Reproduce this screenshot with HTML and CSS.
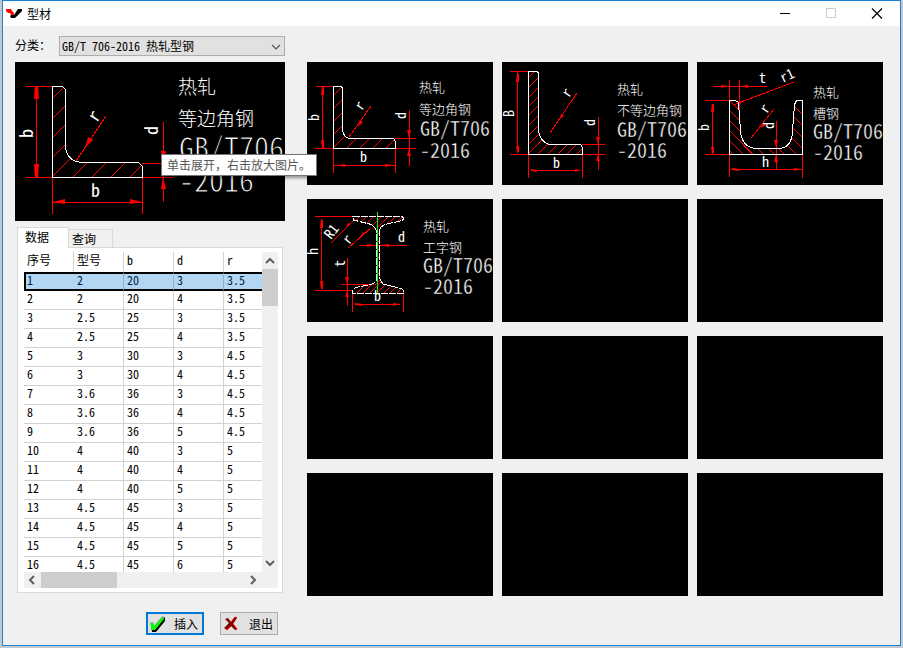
FILE: index.html
```html
<!DOCTYPE html>
<html lang="zh-CN">
<head>
<meta charset="utf-8">
<title>型材</title>
<link rel="stylesheet" href="styles.css">
</head>
<body>
<main class="window">
  <header class="titlebar">
    <svg class="app-icon" width="16" height="16" viewBox="0 0 16 16" aria-hidden="true"><path d="M0 3h5l1 2 2 2v2H5L4 7H2L0 5z" fill="#f00"/><path d="M12 3h4v2l-7 7H5l-1-2 1-1h3z" fill="#000"/></svg>
    <h1 class="title">型材</h1>
    <div class="window-controls">
      <button class="win-btn" aria-label="最小化"><svg width="12" height="12"><path d="M1 5.500h10" stroke="#000"/></svg></button>
      <button class="win-btn" aria-label="最大化" disabled><svg width="12" height="12"><path d="M1.500 .5h9v9h-9z" fill="none" stroke="#ccc"/></svg></button>
      <button class="win-btn" aria-label="关闭"><svg width="12" height="12"><path d="M1 .5l10 10M11 .5L1 10.500" stroke="#000" stroke-width="1.200"/></svg></button>
    </div>
  </header>
  <div class="content">
    <section class="side">
      <div class="category">
        <label for="category">分类：</label>
        <div class="select-wrap">
          <select id="category"><option>GB/T 706-2016 热轧型钢</option></select>
          <svg class="chevron" width="10" height="6" viewBox="0 0 10 6" aria-hidden="true"><path d="M1 1l4 4 4-4" fill="none" stroke="#555" stroke-width="1.200"/></svg>
        </div>
      </div>
      <div class="preview">
        <svg class="drawing" viewBox="0 0 270 159">
          <defs><clipPath id="p0"><path d="M37 24h10l3 3v58q0 15 16 16h57l4 4v13H37z"/></clipPath></defs>
          <path class="hatch" clip-path="url(#p0)" d="M37 37l15-15M37 57l15-15M37 76l15-15M37 96l15-15M37 115l18-18M57 116l18-18M76 116l18-18M95 116l18-18M114 116l18-18"/>
          <path class="dim" d="M11 24.500h27M11 115.500h27M21.500 24v91M37.500 116v36M127.500 115v37M38 140.500h89M127 101.500h22M127 115.500h31M148.500 60v80M91 54L61 99"/>
          <path class="arrow" d="M20 24h3l1 13h-5zM20 115h3l1-13h-5zM38 140l12-3v5zM127 140l-12-3v5zM148 101l-2-12h5zM148 115l-2 12h5zM70 86l3-11 5 3z"/>
          <path class="outline" d="M37.500 24.500h10l3 3v55q0 17 17 18h56l4 4v11h-90z"/>
          <text class="dim-lg" transform="translate(18 76) rotate(-90)">b</text>
          <text class="dim-lg" x="76" y="135">b</text>
          <text class="dim-lg" transform="translate(143 73) rotate(-90)">d</text>
          <text class="dim-lg" transform="translate(82 61) rotate(-57)">r</text>
          <g class="name-lg"><text x="163" y="32">热轧</text><text x="163" y="64">等边角钢</text></g>
          <g class="code-lg"><text x="164" y="97">GB/T706</text><text x="164" y="130">-2016</text></g>
        </svg>
        <div class="tooltip" role="tooltip">单击展开，右击放大图片。</div>
      </div>
      <div class="tabs">
        <div class="tab-list" role="tablist">
          <button class="tab active" role="tab" aria-selected="true">数据</button>
          <button class="tab" role="tab" aria-selected="false">查询</button>
        </div>
        <div class="tab-panel" role="tabpanel">
          <div class="table-area">
            <table class="data">
              <thead><tr><th>序号</th><th>型号</th><th>b</th><th>d</th><th>r</th></tr></thead>
              <tbody>
                <tr class="selected"><td>1</td><td>2</td><td>20</td><td>3</td><td>3.5</td></tr>
                <tr><td>2</td><td>2</td><td>20</td><td>4</td><td>3.5</td></tr>
                <tr><td>3</td><td>2.5</td><td>25</td><td>3</td><td>3.5</td></tr>
                <tr><td>4</td><td>2.5</td><td>25</td><td>4</td><td>3.5</td></tr>
                <tr><td>5</td><td>3</td><td>30</td><td>3</td><td>4.5</td></tr>
                <tr><td>6</td><td>3</td><td>30</td><td>4</td><td>4.5</td></tr>
                <tr><td>7</td><td>3.6</td><td>36</td><td>3</td><td>4.5</td></tr>
                <tr><td>8</td><td>3.6</td><td>36</td><td>4</td><td>4.5</td></tr>
                <tr><td>9</td><td>3.6</td><td>36</td><td>5</td><td>4.5</td></tr>
                <tr><td>10</td><td>4</td><td>40</td><td>3</td><td>5</td></tr>
                <tr><td>11</td><td>4</td><td>40</td><td>4</td><td>5</td></tr>
                <tr><td>12</td><td>4</td><td>40</td><td>5</td><td>5</td></tr>
                <tr><td>13</td><td>4.5</td><td>45</td><td>3</td><td>5</td></tr>
                <tr><td>14</td><td>4.5</td><td>45</td><td>4</td><td>5</td></tr>
                <tr><td>15</td><td>4.5</td><td>45</td><td>5</td><td>5</td></tr>
                <tr><td>16</td><td>4.5</td><td>45</td><td>6</td><td>5</td></tr>
              </tbody>
            </table>
            <div class="vscroll" aria-hidden="true">
              <svg width="16" height="17"><path d="M4 11l4-4 4 4" class="scroll-arrow"/></svg>
              <div class="vthumb"></div>
              <svg width="16" height="17"><path d="M4 6l4 4 4-4" class="scroll-arrow"/></svg>
            </div>
          </div>
          <div class="hscroll" aria-hidden="true">
            <svg width="17" height="16"><path d="M10 4L6 8l4 4" class="scroll-arrow"/></svg>
            <div class="hthumb"></div>
            <svg width="17" height="16"><path d="M6 4l4 4-4 4" class="scroll-arrow"/></svg>
          </div>
        </div>
      </div>
      <div class="actions">
        <button class="btn primary"><svg width="18" height="18" viewBox="0 0 18 18" aria-hidden="true"><path d="M2 9l4 3 9-10 1 1v3L7 17H3z" fill="#000"/><path d="M1 8h4v3L14 1l1 3-9 11H3z" fill="#0f0"/><path d="M1 8h4M6 10l8-9" stroke="#999" fill="none"/></svg>插入</button>
        <button class="btn"><svg width="18" height="18" viewBox="0 0 18 18" aria-hidden="true"><path d="M3 4l3-1 3 4 4-5 2 1-4 6 4 5-2 1-4-4-4 4-3-2 5-5z" fill="#800000"/><path d="M11 9l4 5-1 1M3 13l2 2 4-4M9 7l4-5 2 1" fill="none" stroke="#f00"/></svg>退出</button>
      </div>
    </section>
    <section class="gallery">
      <div class="tile">
        <svg class="drawing" viewBox="0 0 186 123">
          <defs><clipPath id="p1"><path d="M26 24h9v44q2 8 9 8h43l2 3v7H26z"/></clipPath></defs>
          <path class="hatch" clip-path="url(#p1)" d="M26 34l12-12M26 47l12-12M26 60l12-12M26 73l12-12M26 86l14-14M39 87l12-12M52 87l12-12M65 87l12-12M78 87l12-12"/>
          <path class="dim" d="M9 24.500h17M8 86.500h19M15.500 24v62M26.500 86v25M88.500 86v25M27 103.500h61M88 76.500h21M88 86.500h21M102.500 48v56M64 44L42 75"/>
          <path class="arrow" d="M14 33l1-8h2v8zM14 78l1 8h2v-8zM38 102l-8 1 8 2zM78 102l8 1-8 2zM102 76l-2-8h4zM102 86l-2 8h4zM51 65l2-7 3 2z"/>
          <path class="outline" d="M26.500 24.500h8l1 2v42q2 8 8 8h43l2 3v7h-62z"/>
          <text class="dim-sm" transform="translate(12 59) rotate(-90)">b</text><text class="dim-sm" x="53" y="100">b</text>
          <text class="dim-sm" transform="translate(99 57) rotate(-90)">d</text><text class="dim-sm" transform="translate(55 49) rotate(-57)">r</text>
          <g class="name-sm"><text x="112" y="30">热轧</text><text x="112" y="52">等边角钢</text></g>
          <g class="code-sm"><text x="113" y="74">GB/T706</text><text x="113" y="96">-2016</text></g>
        </svg>
      </div>
      <div class="tile">
        <svg class="drawing" viewBox="0 0 186 123">
          <defs><clipPath id="p2"><path d="M26 9h10v60q2 10 12 13h30l2 2v8H26z"/></clipPath></defs>
          <path class="hatch" clip-path="url(#p2)" d="M26 16l12-12M26 26l12-12M26 36l12-12M26 45l12-12M26 54l12-12M26 64l12-12M26 74l12-12M26 83l12-12M26 92l14-14M36 92l14-14M46 92l12-12M56 92l12-12M65 92l12-12M75 92l12-12"/>
          <path class="dim" d="M8 9.500h19M8 92.500h18M15.500 10v81M26.500 92v24M80.500 92v24M29 108.500h49M80 82.500h23M80 92.500h23M96.500 55v53M75 31L48 71"/>
          <path class="arrow" d="M14 20l1-8h2v8zM14 84l1 6h2v-6zM35 108l-6-1v2l6 1zM73 107l5 1-5 2zM96 82l-2-7h4zM96 92l-2 7h4zM58 57l1-5 3 2z"/>
          <path class="outline" d="M26.500 9.500h9l1 2v56q0 10 10 15h32l2 3v7h-54z"/>
          <text class="dim-sm" transform="translate(12 55) rotate(-90)">B</text><text class="dim-sm" x="51" y="106">b</text>
          <text class="dim-sm" transform="translate(93 64) rotate(-90)">d</text><text class="dim-sm" transform="translate(67 36) rotate(-57)">r</text>
          <g class="name-sm"><text x="115" y="32">热轧</text><text x="115" y="53">不等边角钢</text></g>
          <g class="code-sm"><text x="115" y="75">GB/T706</text><text x="115" y="96">-2016</text></g>
        </svg>
      </div>
      <div class="tile">
        <svg class="drawing" viewBox="0 0 186 123">
          <defs><clipPath id="p3"><path d="M32 38h7l3 3 3 34q2 11 14 11h22q12 0 14-11l3-34 3-3h5v54H32z"/></clipPath></defs>
          <path class="hatch" clip-path="url(#p3)" d="M32 38l16 16M32 48l16 16M32 58l16 16M32 68l26 26M32 78l16 16M32 88l8 8M46 83l12 12M59 85l10 10M70 85l10 10M79 84l12 12M88 81l14 14M93 74l14 14M95 65l14 14M96 54l14 14M97 44l12 12"/>
          <path class="dim" d="M8 38.500h24M8 92.500h24M15.500 42v50M16 24.500h54M32.500 18v97M42.500 18v44M105.500 92v24M34 107.500h72M79.500 59v49M97 20L36 43M77 47L54 76"/>
          <path class="arrow" d="M14 50l1-8h2v8zM14 85l1 6h2v-6zM24 23l8 1-8 2zM51 23l-8 1 8 2zM42 107l-7-1v2l7 1zM97 106l7 1-7 2zM79 86l-2-8h4zM79 92l-2 8h4zM64 66l2-5 3 2zM40 40l8-2-5 4z"/>
          <path class="outline" d="M32.500 38.500h6l3 2 1 14 1 14q1 17 16 18h22q13 0 14-17l1-14 1-13 2-4h6v54h-73z"/>
          <text class="dim-sm" transform="translate(12 69) rotate(-90)">b</text><text class="dim-sm" x="62" y="21">t</text>
          <text class="dim-sm" transform="translate(86 21) rotate(-26)">r1</text><text class="dim-sm" transform="translate(70 52) rotate(-57)">r</text>
          <text class="dim-sm" transform="translate(77 67) rotate(-90)">d</text><text class="dim-sm" x="65" y="105">h</text>
          <g class="name-sm"><text x="116" y="35">热轧</text><text x="116" y="56">槽钢</text></g>
          <g class="code-sm"><text x="116" y="77">GB/T706</text><text x="116" y="98">-2016</text></g>
        </svg>
      </div>
      <div class="tile">
        <svg class="drawing" viewBox="0 0 186 123">
          <defs><clipPath id="p4"><path d="M45 17h52v4l-20 4-4 5v50q0 6 12 7l11 3v4H46v-4q0-3 18-5 5-1 6-5V30q-1-4-8-5l-17-4z"/></clipPath></defs>
          <path class="hatch" clip-path="url(#p4)" d="M46 24l8-8M52 25l9-9M59 25l9-9M66 26l10-10M71 28l12-12M78 28l12-12M85 28l12-12M68 38l8-8M68 46l8-8M68 54l8-8M68 62l8-8M68 70l8-8M68 78l8-8M68 86l8-8M48 96l10-10M54 96l11-11M61 96l14-14M68 96l10-10M75 96l10-10M81 96l10-10M88 96l10-10"/>
          <path class="dim" d="M8 17.500h38M8 91.500h38M14.500 20v70M24 44l24-24M41 49l23-20M52 46.500h48M34 85.500h33M40.500 59v48M45.500 92v21M96.500 92v21M48 105.500h45"/>
          <path class="arrow" d="M13 29l1-8h2v8zM13 82l1 8h2v-8zM40 85l-2-7h4zM40 91l-2 7h4zM55 105l-7-1v2l7 1zM86 104l7 1-7 2zM60 45l8 1-8 2zM82 45l-8 1 8 2zM53 38l3-5 3 1zM39 29l2-5 3 1z"/>
          <path d="M70.500 13v82" stroke="#0f0"/>
          <path class="outline dashed" d="M45.500 17.500h50l1 2-1 2-18 4-4 3-1 4v46q1 5 5 7l17 4 2 2v3H45.500v-3l3-3 15-3q5-1 6-5V32q-1-5-7-7l-16-4z"/>
          <text class="dim-sm" transform="translate(11 56) rotate(-90)">h</text><text class="dim-sm" transform="translate(24 41) rotate(-52)">R1</text>
          <text class="dim-sm" transform="translate(42 46) rotate(-50)">r</text><text class="dim-sm" x="91" y="43">d</text>
          <text class="dim-sm" transform="translate(38 68) rotate(-90)">t</text><text class="dim-sm" x="67" y="102">b</text>
          <g class="name-sm"><text x="116" y="32">热轧</text><text x="116" y="53">工字钢</text></g>
          <g class="code-sm"><text x="116" y="74">GB/T706</text><text x="116" y="95">-2016</text></g>
        </svg>
      </div>
      <div class="tile"></div><div class="tile"></div>
      <div class="tile"></div><div class="tile"></div><div class="tile"></div>
      <div class="tile"></div><div class="tile"></div><div class="tile"></div>
    </section>
  </div>
</main>
</body>
</html>
```
FILE: styles.css
```css
* { box-sizing: border-box; }
body {
  margin: 0;
  padding: 0 2px 2px;
  min-height: 100vh;
  display: flex;
  background: #c4c8cc;
  color: #000;
  font: 12px/16px "Noto Sans Mono CJK SC", "Noto Sans CJK SC", monospace;
}
button, select { font: inherit; color: inherit; border-radius: 0; margin: 0; }
.window {
  flex: 1;
  display: flex;
  flex-direction: column;
  border: 1px solid #1883d7;
  background: #f0f0f0;
}
.titlebar {
  display: flex;
  align-items: center;
  height: 25px;
  padding-left: 3px;
  background: #fff;
}
.title { margin: 0 auto 0 5px; font: 12px/16px "Noto Sans CJK SC", sans-serif; }
.window-controls { display: flex; }
.win-btn {
  display: flex;
  align-items: center;
  justify-content: center;
  width: 46px;
  height: 25px;
  padding: 0;
  border: 0;
  background: none;
}
.content { flex: 1; display: flex; gap: 22px; padding: 10px 17px 10px 12px; }
.side { flex: 0 0 270px; display: flex; flex-direction: column; }
.category { display: flex; align-items: center; margin-bottom: 6px; }
.category label { width: 44px; padding-bottom: 2px; }
.select-wrap { position: relative; flex: 1; display: flex; }
.select-wrap select {
  flex: 1;
  height: 20px;
  padding: 0 2px;
  appearance: none;
  border: 1px solid #adadad;
  background: #e1e1e1;
}
.chevron { position: absolute; right: 4px; top: 8px; }
.preview { position: relative; background: #000; }
.drawing { display: block; width: 100%; }
.tooltip {
  position: absolute;
  left: 146px;
  top: 92px;
  z-index: 1;
  padding: 1px 5px;
  border: 1px solid #767676;
  background: #fff;
  box-shadow: 2px 2px 3px rgba(0, 0, 0, .4);
  color: #575757;
  font: 12px/18px "Noto Sans CJK SC", sans-serif;
  white-space: nowrap;
}
.dim, .hatch { fill: none; stroke: #f00; stroke-width: 1; shape-rendering: crispEdges; }
.arrow { fill: #f00; }
.outline { fill: none; stroke: #fff; stroke-width: 1; shape-rendering: crispEdges; }
.dashed { stroke-dasharray: 7 1; }
.drawing text { fill: #fff; }
.dim-lg, .dim-sm { font-family: "Noto Sans Mono CJK SC", monospace; }
.dim-lg { font-size: 18px; }
.dim-sm { font-size: 14px; }
.name-lg, .name-sm { font-family: "Noto Sans CJK SC", sans-serif; font-weight: 300; }
.name-lg { font-size: 19px; }
.name-sm { font-size: 13px; }
.code-lg, .code-sm { font-family: "Noto Sans Mono CJK SC", monospace; stroke: #000; }
.code-lg { font-size: 30px; stroke-width: 1; }
.code-sm { font-size: 20px; stroke-width: .4; }
.tabs { margin: 6px 2px 0; }
.tab-list { display: flex; align-items: flex-end; height: 20px; }
.tab {
  width: 44px;
  height: 18px;
  padding: 0 3px;
  border: 1px solid #d9d9d9;
  border-width: 1px 1px 0 0;
  background: #f0f0f0;
  text-align: left;
}
.tab.active {
  position: relative;
  width: 52px;
  height: 21px;
  margin-bottom: -1px;
  padding: 0 7px 2px;
  border-width: 1px 1px 0;
  background: #fff;
}
.tab-panel { padding: 4px 4px 4px 6px; border: 1px solid #d9d9d9; background: #fff; }
.table-area { display: flex; height: 320px; overflow: hidden; }
.data { flex: 1; width: 238px; table-layout: fixed; border-collapse: separate; border-spacing: 0; align-self: flex-start; }
.data th, .data td {
  height: 19px;
  padding: 0 0 0 3px;
  border-right: 1px solid #d2d2d2;
  border-bottom: 1px solid #d2d2d2;
  text-align: left;
  vertical-align: top;
  font-weight: 400;
  line-height: 14px;
}
.data th { width: 50px; height: 20px; border-bottom: 0; line-height: 16px; }
.data td:first-child { border-right: 0; }
.data th:last-child { width: 38px; }
.data th:last-child, .data td:last-child { border-right: 0; }
.data .selected td {
  border-top: 2px solid #000;
  border-bottom: 2px solid #000;
  background: #b3d7f3;
  border-right-color: #8eb3d0;
  color: #002244;
  line-height: 12px;
}
.data .selected td:first-child { border-left: 2px solid #000; padding-left: 1px; }
.vscroll, .hscroll { display: flex; background: #f0f0f0; }
.vscroll { flex: 0 0 16px; flex-direction: column; }
.vthumb { height: 37px; margin-bottom: auto; background: #cdcdcd; }
.hscroll { height: 16px; }
.hthumb { width: 76px; margin-right: auto; background: #cdcdcd; }
.scroll-arrow { fill: none; stroke: #606060; stroke-width: 2; }
.hscroll svg:last-child { margin-right: 16px; }
.actions { display: flex; justify-content: flex-end; gap: 16px; margin: 19px 7px 0 0; }
.btn {
  display: flex;
  align-items: center;
  justify-content: space-between;
  width: 58px;
  height: 23px;
  padding: 0 4px 0 1px;
  border: 1px solid #adadad;
  background: #e1e1e1;
  line-height: 14px;
}
.btn.primary { border: 2px solid #0078d7; }
.gallery {
  flex: 1;
  display: grid;
  grid-template-columns: repeat(3, 1fr);
  gap: 14px 9px;
  align-content: start;
  margin-top: 26px;
}
.tile { aspect-ratio: 186 / 123; background: #000; }
```
